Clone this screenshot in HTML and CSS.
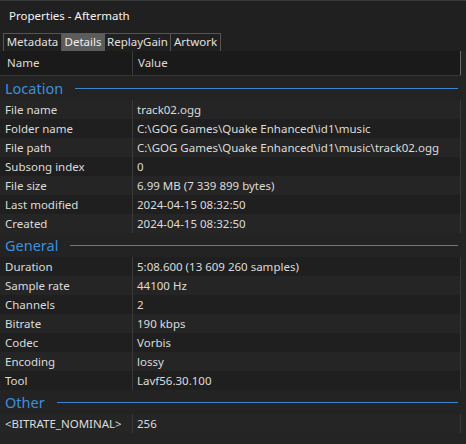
FILE: index.html
```html
<!DOCTYPE html>
<html>
<head>
<meta charset="utf-8">
<link rel="stylesheet" href="styles.css">
</head>
<body>
<div class="window">
  <div class="title">Properties - Aftermath</div>
  <div class="tabs">
    <div class="tab t1">Metadata</div>
    <div class="tab t2 active">Details</div>
    <div class="tab t3">ReplayGain</div>
    <div class="tab t4">Artwork</div>
  </div>
  <div class="list">
    <div class="head">
      <div class="hname">Name</div>
      <div class="hvalue">Value</div>
    </div>
    <div class="group"><span class="gname">Location</span><span class="gline"></span></div>
    <div class="row light"><div class="name">File name</div><div class="value">track02.ogg</div></div>
    <div class="row dark"><div class="name">Folder name</div><div class="value">C:\GOG Games\Quake Enhanced\id1\music</div></div>
    <div class="row light"><div class="name">File path</div><div class="value">C:\GOG Games\Quake Enhanced\id1\music\track02.ogg</div></div>
    <div class="row dark"><div class="name">Subsong index</div><div class="value">0</div></div>
    <div class="row light"><div class="name">File size</div><div class="value">6.99 MB (7 339 899 bytes)</div></div>
    <div class="row dark"><div class="name">Last modified</div><div class="value">2024-04-15 08:32:50</div></div>
    <div class="row light"><div class="name">Created</div><div class="value">2024-04-15 08:32:50</div></div>
    <div class="group"><span class="gname">General</span><span class="gline"></span></div>
    <div class="row dark"><div class="name">Duration</div><div class="value">5:08.600 (13 609 260 samples)</div></div>
    <div class="row light"><div class="name">Sample rate</div><div class="value">44100 Hz</div></div>
    <div class="row dark"><div class="name">Channels</div><div class="value">2</div></div>
    <div class="row light"><div class="name">Bitrate</div><div class="value">190 kbps</div></div>
    <div class="row dark"><div class="name">Codec</div><div class="value">Vorbis</div></div>
    <div class="row light"><div class="name">Encoding</div><div class="value">lossy</div></div>
    <div class="row dark"><div class="name">Tool</div><div class="value">Lavf56.30.100</div></div>
    <div class="group"><span class="gname">Other</span><span class="gline"></span></div>
    <div class="row light"><div class="name">&lt;BITRATE_NOMINAL&gt;</div><div class="value">256</div></div>
  </div>
</div>
</body>
</html>
```
FILE: styles.css
```css
html, body {
  margin: 0;
  padding: 0;
  background: #242424;
}
.window {
  width: 466px;
  height: 444px;
  background: #242424;
  border-top: 1px solid #3a3a3a;
  box-sizing: border-box;
  font-family: "Noto Sans", sans-serif;
  font-size: 11.5px;
  color: #dcdcdc;
  overflow: hidden;
}
.title {
  height: 32px;
  line-height: 30px;
  padding-left: 9px;
  background: #202020;
  color: #f4f4f4;
  font-size: 11.5px;
}
.tabs {
  display: flex;
  height: 18px;
  padding-left: 3px;
  background: #202020;
}
.tab {
  box-sizing: border-box;
  height: 18px;
  line-height: 16px;
  border: 1px solid #555;
  border-bottom: none;
  text-align: center;
  color: #e0e0e0;
}
.tab + .tab { border-left: none; }
.t1 { width: 59px; }
.t2 { width: 43px; }
.t3 { width: 66px; }
.t4 { width: 50px; }
.tab.active {
  background: #5c5c5c;
  border-color: #5c5c5c;
  color: #f0f0f0;
}
.list {
  width: 461px;
}
.head {
  display: flex;
  height: 24px;
  background: #1a1a1a;
  border-bottom: 1px solid #363636;
}
.hname {
  width: 133px;
  box-sizing: border-box;
  padding-left: 7px;
  line-height: 24px;
  border-right: 1px solid #3c3c3c;
}
.hvalue {
  flex: 1;
  padding-left: 5px;
  line-height: 24px;
  border-right: 1px solid #6a6a6a;
}
.group {
  display: flex;
  align-items: center;
  height: 24px;
  background: #232323;
  padding-right: 3px;
}
.gname {
  padding-left: 5px;
  font-size: 14.5px;
  color: #3d8fdc;
  line-height: 24px;
}
.gline {
  flex: 1;
  height: 1px;
  background: #3a86cc;
  margin-left: 12px;
}
.row {
  display: flex;
  height: 19px;
  line-height: 19px;
}
.row.light { background: #252525; }
.row.dark { background: #1f1f1f; }
.name {
  width: 133px;
  box-sizing: border-box;
  padding-left: 5px;
  border-right: 1px solid #3a3a3a;
  white-space: nowrap;
}
.value {
  flex: 1;
  padding-left: 4px;
  border-right: 1px solid #3a3a3a;
  white-space: nowrap;
}
```
